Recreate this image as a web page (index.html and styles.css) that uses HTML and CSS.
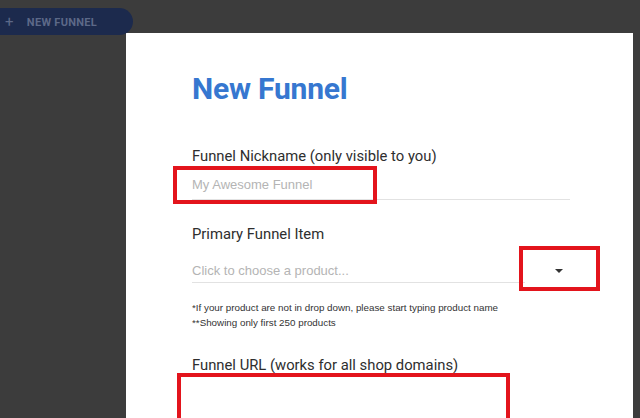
FILE: index.html
```html
<!DOCTYPE html>
<html lang="en">
<head>
  <meta charset="UTF-8" />
  <title>New Funnel</title>
  <link rel="stylesheet" href="styles.css">
</head>
<body>
  <div class="topbar">
    <button class="new-btn"><span class="plus">+</span> NEW FUNNEL</button>
  </div>

  <div class="modal">
    <h1>New Funnel</h1>

    <div class="field first">
      <label>Funnel Nickname (only visible to you)</label>
      <div class="input">My Awesome Funnel</div>
    </div>

    <div class="field">
      <label>Primary Funnel Item</label>
      <div class="input select">
        <span>Click to choose a product...</span>
        <span class="caret"></span>
      </div>
    </div>

    <div class="notes">
      <p>*If your product are not in drop down, please start typing product name</p>
      <p>**Showing only first 250 products</p>
    </div>

    <div class="field">
      <label>Funnel URL (works for all shop domains)</label>
    </div>

    <!-- red annotation boxes -->
    <div class="mark mark-name"></div>
    <div class="mark mark-caret"></div>
    <div class="mark mark-url"></div>
  </div>
</body>
</html>
```

FILE: styles.css
```css
html, body {
  margin: 0;
  height: 100%;
  overflow: hidden;
}
body {
  font-family: Roboto, 'Liberation Sans', sans-serif;
  background: #3c3c3c;
  color: #333;
}
.topbar {
  height: 33px;
  position: relative;
}
.new-btn {
  position: absolute;
  top: 8px;
  left: 0;
  width: 133px;
  height: 27px;
  border: none;
  border-radius: 0 14px 14px 0;
  background: #1c2a4d;
  color: #5d6988;
  font-family: Roboto, sans-serif;
  font-weight: bold;
  font-size: 11px;
  letter-spacing: 0.3px;
  text-align: left;
  padding: 0 0 0 5px;
  z-index: 2;
}
.new-btn .plus {
  font-size: 15px;
  font-weight: normal;
  margin-right: 10px;
  vertical-align: -1px;
}
.modal {
  position: relative;
  background: #fff;
  margin-left: 126px;
  width: 441px;
  height: 400px;
  padding: 0 0 0 66px;
}
h1 {
  margin: 0;
  padding-top: 38px;
  font-size: 30px;
  line-height: 36px;
  font-weight: bold;
  color: #3677d0;
  letter-spacing: -0.2px;
}
.field {
  margin-top: 25px;
}
.field.first {
  margin-top: 40px;
}
.field label {
  display: block;
  font-size: 14.8px;
  line-height: 18px;
  color: #2e2e2e;
}
.input {
  width: 378px;
  margin-top: 12px;
  padding-bottom: 6px;
  border-bottom: 1px solid #e2e2e2;
  font-family: 'Liberation Sans', Arial, sans-serif;
  font-size: 13px;
  line-height: 16px;
  color: #b4b4b4;
}
.select {
  width: 333px;
  margin-top: 20px;
  padding-bottom: 3px;
  display: flex;
  justify-content: space-between;
  align-items: center;
}
.caret {
  width: 0;
  height: 0;
  border-left: 4px solid transparent;
  border-right: 4px solid transparent;
  border-top: 4px solid #333;
  margin-right: -38px;
}
.notes {
  margin-top: 17px;
  font-family: 'Liberation Sans', Arial, sans-serif;
  font-size: 9.8px;
  line-height: 15px;
  color: #333;
}
.notes p {
  margin: 0;
}
.notes + .field {
  margin-top: 26px;
}
.mark {
  position: absolute;
  border: 4px solid #e3141c;
  box-sizing: border-box;
}
.mark-name {
  left: 47px;
  top: 133px;
  width: 204px;
  height: 38px;
}
.mark-caret {
  left: 393px;
  top: 213px;
  width: 81px;
  height: 45px;
}
.mark-url {
  left: 51px;
  top: 340px;
  width: 333px;
  height: 60px;
}
```
